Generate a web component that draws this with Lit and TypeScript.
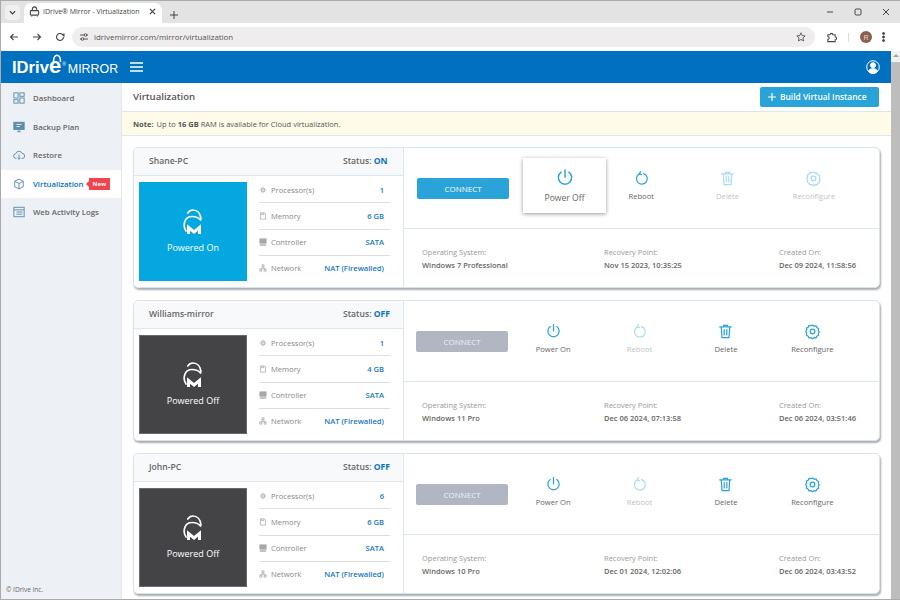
import { LitElement, html, css, svg } from "lit";
import { customElement } from "lit/decorators.js";

const power = svg`<path d="M6.800 4.600a7.300 7.300 0 1 0 8.400 0" /><path d="M11 2.200v8" />`;
const reboot = svg`<path d="M8.400 5a7 7 0 1 0 5.200-.4" /><path d="M9.800 2.200 8 5l3 1" />`;
const trash = svg`<path d="M3.500 5h15M8.500 5V3h5v2M5.500 5l1 14h9l1-14M9.300 8.500v7M12.700 8.500v7" />`;
const gear = svg`<circle cx="11" cy="11" r="3" /><path d="M11 2.500l2 1.500 2.600-.3 1 2.300 2.300 1.200-.4 2.500 1.200 1.800-1.200 1.800.4 2.500-2.300 1.200-1 2.300-2.600-.3-2 1.500-2-1.500-2.600.3-1-2.300-2.300-1.200.4-2.500L2.300 11l1.200-1.800L3.100 6.700l2.300-1.200 1-2.300 2.600.3z" />`;

const machines = [
  { name: "Shane-PC", on: true, cpu: "1", mem: "6 GB", os: "Windows 7 Professional", rec: "Nov 15 2023, 10:35:25", created: "Dec 09 2024, 11:58:56" },
  { name: "Williams-mirror", on: false, cpu: "1", mem: "4 GB", os: "Windows 11 Pro", rec: "Dec 06 2024, 07:13:58", created: "Dec 06 2024, 03:51:46" },
  { name: "John-PC", on: false, cpu: "6", mem: "6 GB", os: "Windows 10 Pro", rec: "Dec 01 2024, 12:02:06", created: "Dec 06 2024, 03:43:52" },
];

const navIcons = [
  svg`<rect x="1" y="1" width="5" height="6"/><rect x="8" y="1" width="5" height="4"/><rect x="1" y="9" width="5" height="4"/><rect x="8" y="7" width="5" height="6"/>`,
  svg`<rect x="1" y="1.500" width="12" height="8.500" fill="currentColor"/><path d="M5 12.500h4M7 10v2.500"/><path d="M4 4h6M4 6.500h4" stroke="#edf1f5"/>`,
  svg`<path d="M4 11H3.500a2.700 2.700 0 0 1-.3-5.400 3.900 3.900 0 0 1 7.500-.4 2.900 2.900 0 0 1 .1 5.800H10"/><path d="M7 6.500v5.500M5.200 10.300 7 12l1.800-1.700"/>`,
  svg`<path d="M7 1.200 12 3.800v6.400L7 12.800 2 10.200V3.800zM2 3.800l5 2.600 5-2.600M7 6.400v6.400"/>`,
  svg`<rect x="1" y="1.500" width="12" height="11"/><path d="M1 4.500h12M4 7h7M4 9.500h7"/>`,
];
const nav = ["Dashboard", "Backup Plan", "Restore", "Virtualization", "Web Activity Logs"];

const specIcons = [
  svg`<path d="M3 3l8 8M11 3l-8 8M7 1v12M1 7h12"/><rect x="5" y="5" width="4" height="4" fill="#fff"/>`,
  svg`<path d="M2.500 1.500h7l2 2v9h-9z"/><path d="M4.500 1.500v3h4v-3"/>`,
  svg`<rect x="1.500" y="1.500" width="11" height="7.500" fill="currentColor"/><path d="M1.500 11h11M1.500 13h11"/>`,
  svg`<rect x="5.300" y="1.500" width="3.400" height="3.400"/><rect x="1.500" y="9" width="3.400" height="3.400"/><rect x="9" y="9" width="3.400" height="3.400"/><path d="M7 5v2.500M3.200 9V7.500h7.600V9"/>`,
];

@customElement("app-root")
export class AppRoot extends LitElement {
  static styles = css`
    :host { display: block; width: 900px; height: 600px; overflow: hidden; font-family: "Open Sans", sans-serif; color: #555; }
    * { box-sizing: border-box; }
    svg { display: block; flex: none; fill: none; stroke: currentColor; }
    .window { width: 900px; height: 600px; display: flex; flex-direction: column; border: 1px solid #ababab; border-right: 0; background: #fff; overflow: hidden; }
    .tabs { height: 22px; flex: none; background: #e3e3e3; display: flex; align-items: flex-end; padding-left: 4px; color: #3c3c3c; }
    .tabdrop { width: 15px; height: 15px; margin: 0 4px 3px 0; border-radius: 4px; background: #efefef; display: flex; align-items: center; justify-content: center; }
    .tab { width: 138px; height: 20px; background: #fff; border-radius: 7px 7px 0 0; display: flex; align-items: center; padding: 0 6px 3px 5px; font: 7px "Open Sans", sans-serif; color: #444; }
    .tab span { flex: 1; margin-left: 3px; white-space: nowrap; }
    .plus { margin: 0 0 4px 8px; width: 8px; height: 8px; }
    .winbtns { margin-left: auto; display: flex; gap: 20px; padding: 0 10px 7px 0; color: #444; }
    .toolbar { height: 28px; flex: none; display: flex; align-items: center; padding-left: 8px; color: #444; background: #fff; }
    .toolbtns { display: flex; gap: 13px; align-items: center; width: 63px; }
    .address { width: 743px; height: 20px; border-radius: 10px; background: #efedee; display: flex; align-items: center; padding: 0 9px 0 7px; font: 7.900px "Open Sans", sans-serif; color: #555; }
    .address span { flex: 1; margin-left: 5px; }
    .tbright { display: flex; align-items: center; gap: 11px; margin-left: 11px; }
    .avatar { width: 12px; height: 12px; border-radius: 50%; background: #8a5f50; color: #e9dad4; font: 7px "Liberation Sans", sans-serif; display: flex; align-items: center; justify-content: center; }
    .sep { width: 1px; height: 9px; background: #ddd; }
    .dots { margin-left: -1px; }
    .app { flex: 1; min-height: 0; display: flex; }
    .page { flex: 1; min-width: 0; display: flex; flex-direction: column; }
    .scroll { width: 9px; flex: none; background: #f1f1f1; display: flex; flex-direction: column; align-items: center; }
    .arrow { width: 0; height: 0; border: 3px solid transparent; border-top: 0; border-bottom: 3px solid #a3a3a3; margin: 3px 0 5px; }
    .thumb { width: 100%; flex: 1; background: #bdbdbd; }
    header { height: 32px; flex: none; background: #0170bf; display: flex; align-items: center; color: #fff; padding: 0 11px 0 11px; }
    .logo { position: relative; width: 107px; display: flex; align-items: baseline; font: 700 16.600px "Liberation Sans", sans-serif; }
    .logo i { font-style: normal; font-weight: 700; font-size: 22px; line-height: 20px; }
    .logo sup { font: 400 5px "Liberation Sans", sans-serif; align-self: flex-start; margin: 5px 0 0 1px; }
    .logo b { font: 400 12.400px "Liberation Sans", sans-serif; margin-left: 2px; }
    .lock { position: absolute; left: 39px; top: -2px; }
    .burger { margin-left: 11px; }
    .user { margin-left: auto; }
    .body { flex: 1; min-height: 0; display: flex; }
    aside { width: 121px; flex: none; background: #edf1f5; border-right: 1px solid #e2e7ec; display: flex; flex-direction: column; padding-top: 1px; }
    .nav { height: 28.500px; flex: none; display: flex; align-items: center; padding-left: 12px; gap: 8px; font-size: 7.800px; font-weight: 600; color: #666; }
    .nav svg { color: #5b8eab; }
    .nav.active { background: #fff; color: #0170bf; }
    .badge { position: relative; margin-left: -3px; background: #f2434e; color: #fff; font-size: 6px; font-weight: 700; padding: 0 4px; height: 12px; line-height: 12px; }
    .badge::before { content: ""; position: absolute; left: -3px; top: 3px; border: 3px solid transparent; border-left: 0; border-right: 3px solid #f2434e; }
    .copy { margin-top: auto; padding: 0 0 5px 5px; font-size: 6.500px; color: #666; }
    main { flex: 1; min-width: 0; display: flex; flex-direction: column; }
    .title { height: 29px; flex: none; display: flex; align-items: center; justify-content: space-between; padding: 0 12px 1px 11px; border-bottom: 1px solid #dde4ea; font-size: 9.600px; font-weight: 600; color: #555; }
    .build { width: 119px; height: 20px; background: #29a3d8; color: #fff; border-radius: 2px; display: flex; align-items: center; padding-left: 8px; gap: 4px; font-size: 8.400px; font-weight: 600; }
    .note { height: 24px; flex: none; background: #fffbe9; border-bottom: 1px solid #dde8ec; display: flex; align-items: center; padding-left: 11px; font-size: 7.500px; color: #555; gap: 3px; }
    .note b { font-weight: 700; }
    .cards { padding: 11px 11px 0 11px; display: flex; flex-direction: column; gap: 12px; }
    .card { height: 141px; flex: none; display: flex; background: #fff; border: 1px solid #dbe3ea; border-radius: 5px; box-shadow: 1px 2px 2px #a9adb1; overflow: hidden; }
    .left { width: 270px; flex: none; border-right: 1px solid #dfe6ec; display: flex; flex-direction: column; }
    .chead { height: 28px; flex: none; background: #f8f9fb; border-bottom: 1px solid #dfe6ec; display: flex; align-items: center; justify-content: space-between; padding: 0 13px 2px 15px; font-size: 8.600px; font-weight: 600; color: #666; }
    .status { width: 47px; white-space: nowrap; }
    .chead em { font-style: normal; font-weight: 700; color: #0c75bf; }
    .lbody { flex: 1; display: flex; padding: 6px 13px 6px 5px; gap: 12px; }
    .state { width: 108px; flex: none; display: flex; flex-direction: column; align-items: center; justify-content: center; gap: 6px; color: #fff; font-size: 9px; }
    .state.on { background: #05a7e0; }
    .state.off { background: #444447; border: 1px solid #6a6a6c; }
    .specs { flex: 1; display: flex; flex-direction: column; margin-top: -5px; }
    .spec { flex: 1; display: flex; align-items: center; gap: 4px; font-size: 7.600px; color: #888; padding-right: 6px; }
    .spec + .spec { border-top: 1px solid #dedede; }
    .spec svg { color: #a4a8ab; }
    .spec strong { margin-left: auto; font-weight: 600; color: #1877bd; font-size: 7.600px; }
    .right { flex: 1; min-width: 0; display: flex; flex-direction: column; }
    .top { height: 81px; flex: none; display: flex; align-items: center; border-bottom: 1px solid #dfe6ec; padding-left: 12px; }
    .connect { width: 92px; height: 21px; flex: none; background: #29a3d8; color: #fff; border-radius: 2px; display: flex; align-items: center; justify-content: center; font-size: 8px; font-weight: 400; }
    .connect.off { background: #b1b6c2; color: #eef0f3; }
    .acts { flex: 1; display: flex; align-items: center; padding-left: 2px; margin-top: -5px; }
    .card.on .top { padding-left: 13px; }
    .card.on .acts { padding-left: 14px; }
    .act { width: 86.400px; flex: none; display: flex; flex-direction: column; align-items: center; gap: 4px; font-size: 7.600px; color: #666; }
    .act svg { color: #29a3e0; }
    .act.dim { color: #c0c4c7; }
    .act.dim svg { color: #a9dcf5; }
    .act.big { width: 83px; height: 55px; justify-content: center; background: #fff; box-shadow: 0 1px 4px #999; font-size: 8.600px; margin: 0 -8px 0 0; position: relative; }
    .bottom { flex: 1; display: flex; align-items: center; padding-left: 18px; }
    .bottom div { display: flex; flex: none; flex-direction: column; gap: 3px; font-size: 7.500px; color: #999; width: 182px; }
    .bottom div:nth-child(2) { width: 175px; }
    .bottom div:last-child { width: auto; }
    .bottom b { font-weight: 600; color: #666; font-size: 7.500px; white-space: nowrap; }
  `;

  private act(label: string, icon: unknown, cls = "") {
    const s = cls === "big" ? 20 : 17;
    return html`<div class="act ${cls}"><svg width=${s} height=${s} viewBox="0 0 22 22" stroke-width="1.600" stroke-linecap="round">${icon}</svg>${label}</div>`;
  }

  private card(m: (typeof machines)[number]) {
    const specs = [["Processor(s)", m.cpu], ["Memory", m.mem], ["Controller", "SATA"], ["Network", "NAT (Firewalled)"]];
    return html`<div class="card ${m.on ? "on" : ""}">
      <div class="left">
        <div class="chead"><span>${m.name}</span><span class="status">Status: <em>${m.on ? "ON" : "OFF"}</em></span></div>
        <div class="lbody">
          <div class="state ${m.on ? "on" : "off"}">
            <svg width="20" height="26" viewBox="0 0 20 26" stroke="#fff" stroke-width="1.700" stroke-linecap="round">
              <path d="M4.800 4C6 2 8 1 10 1c4 0 7.500 3 8 9"/>
              <path d="M3 22C1 19 .8 15 2 12c1.200-3 4-4.500 7-4.500 3.500 0 6.500 1 8.500 3.500"/>
              <path d="M5.500 25v-6.500l5.500 4.500 5.500-4.500V25" stroke-width="3" stroke-linecap="butt"/>
            </svg>
            <span>${m.on ? "Powered On" : "Powered Off"}</span>
          </div>
          <div class="specs">
            ${specs.map((s, i) => html`<div class="spec"><svg width="8" height="8" viewBox="0 0 14 14" stroke-width="1.300">${specIcons[i]}</svg><span>${s[0]}</span><strong>${s[1]}</strong></div>`)}
          </div>
        </div>
      </div>
      <div class="right">
        <div class="top">
          <div class="connect ${m.on ? "" : "off"}">CONNECT</div>
          <div class="acts">
            ${m.on
              ? html`${this.act("Power Off", power, "big")}${this.act("Reboot", reboot)}${this.act("Delete", trash, "dim")}${this.act("Reconfigure", gear, "dim")}`
              : html`${this.act("Power On", power)}${this.act("Reboot", reboot, "dim")}${this.act("Delete", trash)}${this.act("Reconfigure", gear)}`}
          </div>
        </div>
        <div class="bottom">
          <div>Operating System:<b>${m.os}</b></div>
          <div>Recovery Point:<b>${m.rec}</b></div>
          <div>Created On:<b>${m.created}</b></div>
        </div>
      </div>
    </div>`;
  }

  render() {
    return html`<div class="window">
      <div class="tabs">
        <div class="tabdrop"><svg width="7" height="7" viewBox="0 0 8 8" stroke-width="1.400"><path d="M1 2.500 4 5.500 7 2.500"/></svg></div>
        <div class="tab">
          <svg width="11" height="11" viewBox="0 0 12 12" stroke="#2b8fd0" stroke-width="1.200"><path d="M3.500 5C3.500 2 5 1 6 1s2.500 1 2.500 4"/><rect x="1.500" y="5" width="9" height="5" rx="1"/><path d="M3 10.500v1M9 10.500v1"/></svg>
          <span>IDrive® Mirror - Virtualization</span>
          <svg width="7" height="7" viewBox="0 0 8 8" stroke-width="1.400"><path d="M1 1l6 6M7 1 1 7"/></svg>
        </div>
        <svg class="plus" viewBox="0 0 10 10" stroke-width="1.200"><path d="M5 0v10M0 5h10"/></svg>
        <div class="winbtns">
          <svg width="8" height="8" viewBox="0 0 8 8"><path d="M1 4h6"/></svg>
          <svg width="8" height="8" viewBox="0 0 8 8"><rect x="1" y="1" width="6" height="6" rx="1.200"/></svg>
          <svg width="8" height="8" viewBox="0 0 8 8"><path d="M1 1l6 6M7 1 1 7"/></svg>
        </div>
      </div>
      <div class="toolbar">
        <div class="toolbtns">
          <svg width="10" height="10" viewBox="0 0 10 10" stroke-width="1.100"><path d="M9 5H1.500M4.500 2 1.500 5l3 3"/></svg>
          <svg width="10" height="10" viewBox="0 0 10 10" stroke="#aaa" stroke-width="1.100"><path d="M1 5h7.500M5.500 2l3 3-3 3"/></svg>
          <svg width="10" height="10" viewBox="0 0 10 10" stroke-width="1.100"><path d="M8.500 5a3.500 3.500 0 1 1-1-2.500L9 4V1.500"/></svg>
        </div>
        <div class="address">
          <svg width="10" height="10" viewBox="0 0 10 10" stroke-width="1"><path d="M1 3h4M8 3h1M1 7h1M5 7h4"/><circle cx="6.500" cy="3" r="1.300"/><circle cx="3.500" cy="7" r="1.300"/></svg>
          <span>idrivemirror.com/mirror/virtualization</span>
          <svg width="10" height="10" viewBox="0 0 12 12" stroke-width="1.100"><path d="M6 1l1.500 3.300 3.500.4-2.600 2.400.7 3.600L6 9l-3.100 1.700.7-3.600L1 4.700l3.500-.4z"/></svg>
        </div>
        <div class="tbright">
          <svg width="11" height="11" viewBox="0 0 12 12" stroke-width="1.100"><path d="M2 3h2.500a1.500 1.500 0 0 1 3 0H10v2.500a1.500 1.500 0 0 1 0 3V10.500H2V8a1.500 1.500 0 0 0 0-3z"/></svg>
          <div class="sep"></div>
          <div class="avatar">R</div>
          <svg class="dots" width="3" height="10" viewBox="0 0 3 10" stroke="none"><circle cx="1.500" cy="1.500" r="1" fill="#444"/><circle cx="1.500" cy="5" r="1" fill="#444"/><circle cx="1.500" cy="8.500" r="1" fill="#444"/></svg>
        </div>
      </div>
      <div class="app">
        <div class="page">
          <header>
            <div class="logo">
              IDriv<i>e</i><sup>®</sup><b>MIRROR</b>
              <svg class="lock" width="12" height="8" viewBox="0 0 12 8" stroke="#fff" stroke-width="1.500"><path d="M2.500 8C2.500 3.500 4 1.200 6 1.200S9.500 3.500 9.500 8"/></svg>
            </div>
            <svg class="burger" width="13" height="10" viewBox="0 0 13 10" stroke-width="1.400"><path d="M0 1h13M0 5h13M0 9h13"/></svg>
            <svg class="user" width="14" height="14" viewBox="0 0 14 14" stroke-width="1"><circle cx="7" cy="7" r="6.300"/><circle cx="7" cy="5.200" r="2.500" fill="#fff"/><path d="M2.500 11.500C3 9.300 5 8.700 7 8.700s4 .6 4.500 2.800A6.300 6.300 0 0 1 2.500 11.500z" fill="#fff"/></svg>
          </header>
          <div class="body">
            <aside>
              ${nav.map((n, i) => html`<div class="nav ${i === 3 ? "active" : ""}">
                <svg width="12" height="12" viewBox="0 0 14 14" stroke-width="1.100">${navIcons[i]}</svg>
                <span>${n}</span>${i === 3 ? html`<span class="badge">New</span>` : ""}
              </div>`)}
              <div class="copy">© IDrive Inc.</div>
            </aside>
            <main>
              <div class="title"><span>Virtualization</span><div class="build"><svg width="8" height="8" viewBox="0 0 8 8" stroke-width="1.200"><path d="M4 0v8M0 4h8"/></svg>Build Virtual Instance</div></div>
              <div class="note"><b>Note:</b><span>Up to <b>16 GB</b> RAM is available for Cloud virtualization.</span></div>
              <div class="cards">${machines.map((m) => this.card(m))}</div>
            </main>
          </div>
        </div>
        <div class="scroll"><div class="arrow"></div><div class="thumb"></div></div>
      </div>
    </div>`;
  }
}
